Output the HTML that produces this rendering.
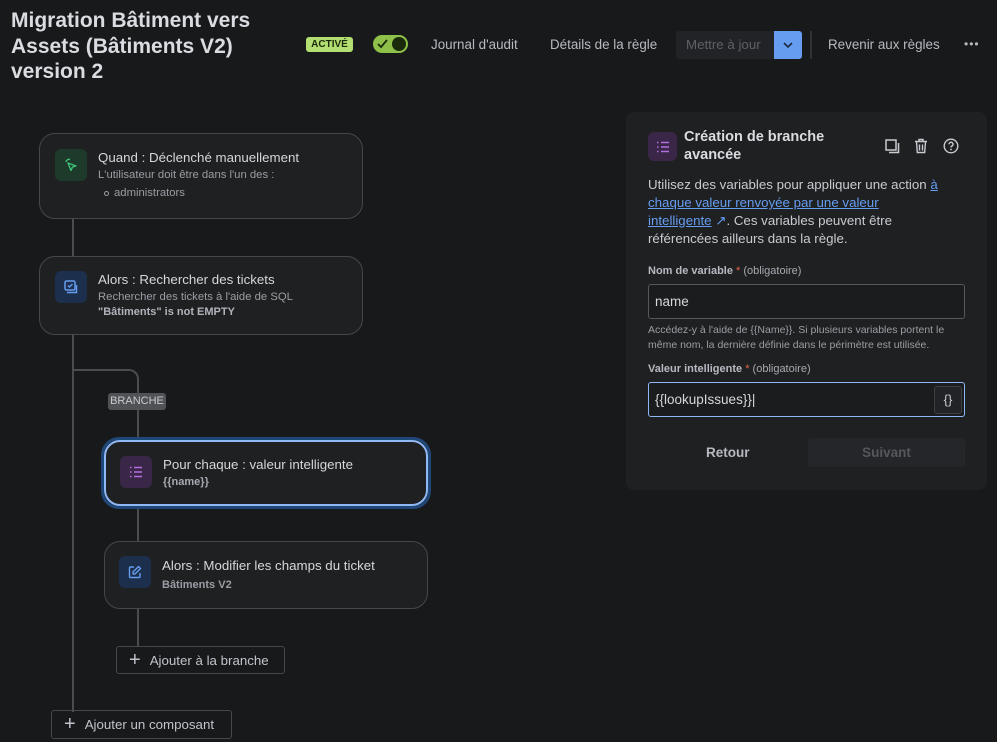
<!DOCTYPE html>
<html><head><meta charset="utf-8"><style>
*{box-sizing:border-box;margin:0;padding:0}
body{width:997px;height:742px;background:#18191b;font-family:"Liberation Sans",sans-serif;color:#c8cbd0;position:relative;overflow:hidden}
.abs{position:absolute}
h1{position:absolute;left:11px;top:8px;font-size:21px;line-height:25.5px;font-weight:bold;color:#d9dce0;width:280px}
.nav{font-size:13.4px;color:#b6bac0;top:37px}
.card{position:absolute;background:#1f2022;border:1px solid #45474a;border-radius:16px}
.ic{position:absolute;width:32px;height:32px;border-radius:6px;display:flex;align-items:center;justify-content:center}
.t{position:absolute;font-size:13.3px;color:#d4d7db}
.s{position:absolute;font-size:11.3px;color:#9a9ea4}
.b{position:absolute;font-size:11px;font-weight:bold;color:#9a9ea4}
.line{position:absolute;background:#4a4c4f}
.btn{position:absolute;border:1px solid #45474a;border-radius:3px;font-size:13.3px;color:#c0c4ca;display:flex;align-items:center;padding-left:12px}
.btn span.p{font-size:20px;font-weight:300;margin-right:9px;color:#c0c4ca}
</style></head><body>
<h1>Migration Bâtiment vers Assets (Bâtiments V2) version 2</h1>
<div class="abs" style="left:306px;top:37px;width:47px;height:15px;background:#b3df72;border-radius:3px;color:#1b2a0a;font-size:10px;font-weight:bold;text-align:center;line-height:15px">ACTIVÉ</div>
<div class="abs" style="left:373px;top:35px;width:35px;height:18px;background:#8fc14a;border-radius:9px">
<svg class="abs" style="left:4px;top:4px" width="11" height="10" viewBox="0 0 11 10"><path d="M1 5l3 3 6-7" stroke="#1b2a0a" stroke-width="1.8" fill="none"/></svg>
<div class="abs" style="right:2px;top:2px;width:14px;height:14px;border-radius:50%;background:#1b2a0a"></div></div>
<div class="abs nav" style="left:431px">Journal d'audit</div>
<div class="abs nav" style="left:550px">Détails de la règle</div>
<div class="abs" style="left:676px;top:31px;width:98px;height:28px;background:#222326;border-radius:3px 0 0 3px;color:#5d6167;font-size:13.3px;line-height:28px;padding-left:10px">Mettre à jour</div>
<div class="abs" style="left:774px;top:31px;width:28px;height:28px;background:#669df1;border-radius:0 3px 3px 0"><svg class="abs" style="left:9px;top:10px" width="10" height="8"><path d="M1 2l4 4 4-4" stroke="#1c2b41" stroke-width="1.6" fill="none"/></svg></div>
<div class="abs" style="left:810px;top:31px;width:2px;height:28px;background:#2f3134"></div>
<div class="abs nav" style="left:828px">Revenir aux règles</div>
<div class="abs" style="left:964px;top:37px;font-size:12px;color:#b6bac0;letter-spacing:1px">•••</div>

<div class="line" style="left:72px;top:218px;width:2px;height:38px"></div>
<div class="line" style="left:72px;top:334px;width:2px;height:378px"></div>
<div class="abs" style="left:72px;top:369px;width:67px;height:40px;border-top:2px solid #4a4c4f;border-right:2px solid #4a4c4f;border-top-right-radius:10px"></div>
<div class="line" style="left:137px;top:405px;width:2px;height:36px"></div>
<div class="abs" style="left:108px;top:393px;width:58px;height:17px;background:#505256;border-radius:3px;color:#c8cbd0;font-size:11px;text-align:center;line-height:17px">BRANCHE</div>
<div class="line" style="left:137px;top:506px;width:2px;height:36px"></div>
<div class="line" style="left:137px;top:608px;width:2px;height:39px"></div>

<div class="card" style="left:39px;top:133px;width:324px;height:86px">
<div class="ic" style="left:15px;top:15px;background:#1d3a2a"><svg width="14" height="14" viewBox="0 0 14 14"><path d="M4 5l8 3-3.5 1L7 12.5z" stroke="#3fc27a" stroke-width="1.4" fill="none" stroke-linejoin="round"/><path d="M2 4a3 3 0 0 1 4-2.5" stroke="#3fc27a" stroke-width="1.3" fill="none"/></svg></div>
<div class="t" style="left:58px;top:16px">Quand : Déclenché manuellement</div>
<div class="s" style="left:58px;top:35px">L'utilisateur doit être dans l'un des :</div>
<div class="abs" style="left:64px;top:57px;width:5px;height:5px;border:1px solid #9a9ea4;border-radius:50%"></div>
<div class="s" style="left:74px;top:53px">administrators</div>
</div>

<div class="card" style="left:39px;top:256px;width:324px;height:79px">
<div class="ic" style="left:15px;top:14px;background:#1c2f4d"><svg width="16" height="16" viewBox="0 0 16 16"><rect x="2" y="2" width="10" height="9" rx="1.5" stroke="#669df1" stroke-width="1.5" fill="none"/><path d="M5 6.5l1.5 1.5 3-3" stroke="#669df1" stroke-width="1.4" fill="none"/><path d="M4 13.5h9.5V6" stroke="#669df1" stroke-width="1.4" fill="none"/></svg></div>
<div class="t" style="left:58px;top:15px">Alors : Rechercher des tickets</div>
<div class="s" style="left:58px;top:34px">Rechercher des tickets à l'aide de SQL</div>
<div class="b" style="left:58px;top:49px;color:#b0b4ba">"Bâtiments" is not EMPTY</div>
</div>

<div class="abs" style="left:101px;top:437px;width:330px;height:72px;border:3px solid #1f4778;border-radius:18px"></div>
<div class="card" style="left:104px;top:440px;width:324px;height:66px;border:2px solid #8fb8f5">
<div class="ic" style="left:14px;top:14px;background:#3a2646"><svg width="14" height="12" viewBox="0 0 14 12"><g stroke="#b36fe0" stroke-width="1.5"><path d="M1 1.5h1.5M5 1.5h8M1 6h1.5M5 6h8M1 10.5h1.5M5 10.5h8"/></g></svg></div>
<div class="t" style="left:57px;top:15px">Pour chaque : valeur intelligente</div>
<div class="b" style="left:57px;top:34px;color:#a6aab0">{{name}}</div>
</div>

<div class="card" style="left:104px;top:541px;width:324px;height:68px">
<div class="ic" style="left:14px;top:14px;background:#1c2f4d"><svg width="14" height="14" viewBox="0 0 14 14"><path d="M6 2H2.5A1 1 0 0 0 1.5 3v8.5a1 1 0 0 0 1 1H11a1 1 0 0 0 1-1V8" stroke="#669df1" stroke-width="1.4" fill="none"/><path d="M10.5 1.5l2 2L7 9H5V7z" stroke="#669df1" stroke-width="1.4" fill="none" stroke-linejoin="round"/></svg></div>
<div class="t" style="left:57px;top:16px">Alors : Modifier les champs du ticket</div>
<div class="b" style="left:57px;top:37px">Bâtiments V2</div>
</div>

<div class="btn" style="left:116px;top:646px;width:169px;height:28px"><span class="p">+</span>Ajouter à la branche</div>
<div class="btn" style="left:51px;top:710px;width:181px;height:29px"><span class="p">+</span>Ajouter un composant</div>

<div class="abs" style="left:626px;top:112px;width:361px;height:378px;background:#1f2022;border-radius:8px">
<div class="ic" style="left:22px;top:20px;width:29px;height:29px;background:#3a2646"><svg width="14" height="12" viewBox="0 0 14 12"><g stroke="#b36fe0" stroke-width="1.5"><path d="M1 1.5h1.5M5 1.5h8M1 6h1.5M5 6h8M1 10.5h1.5M5 10.5h8"/></g></svg></div>
<div class="abs" style="left:58px;top:16px;font-size:14.5px;font-weight:bold;color:#d9dce0;line-height:18px;width:170px">Création de branche avancée</div>
<svg class="abs" style="left:259px;top:27px" width="15" height="15" viewBox="0 0 15 15"><rect x="1" y="1" width="10" height="10" stroke="#c8cbd0" stroke-width="1.5" fill="none"/><path d="M13.5 4v9.5H4" stroke="#c8cbd0" stroke-width="1.5" fill="none"/></svg>
<svg class="abs" style="left:288px;top:26px" width="14" height="16" viewBox="0 0 14 16"><path d="M1 3.5h12M5 3.5V1.5h4v2M2.5 3.5l.8 11h7.4l.8-11M5.5 6.5v6M8.5 6.5v6" stroke="#c8cbd0" stroke-width="1.4" fill="none"/></svg>
<svg class="abs" style="left:317px;top:26px" width="16" height="16" viewBox="0 0 16 16"><circle cx="8" cy="8" r="6.8" stroke="#c8cbd0" stroke-width="1.4" fill="none"/><path d="M6 6.3a2 2 0 1 1 2.5 1.9c-.5.2-.5.6-.5 1.3" stroke="#c8cbd0" stroke-width="1.4" fill="none"/><circle cx="8" cy="11.5" r=".9" fill="#c8cbd0"/></svg>
<div class="abs" style="left:22px;top:64px;width:296px;font-size:13.3px;line-height:18px;color:#c8cbd0">Utilisez des variables pour appliquer une action <span style="color:#669df1;text-decoration:underline">à chaque valeur renvoyée par une valeur intelligente</span> <span style="color:#669df1">↗</span>. Ces variables peuvent être référencées ailleurs dans la règle.</div>
<div class="abs" style="left:22px;top:153px;font-size:11px;color:#a6aab0"><b style="color:#b6bac0">Nom de variable</b> <span style="color:#e2674e">*</span> (obligatoire)</div>
<div class="abs" style="left:22px;top:172px;width:317px;height:35px;border:1px solid #55585c;border-radius:3px;background:#1b1c1e;font-size:13.5px;line-height:33px;padding-left:6px;color:#d4d7db">name</div>
<div class="abs" style="left:22px;top:211px;width:320px;font-size:10.5px;line-height:15px;color:#9a9ea4">Accédez-y à l'aide de {{Name}}. Si plusieurs variables portent le même nom, la dernière définie dans le périmètre est utilisée.</div>
<div class="abs" style="left:22px;top:251px;font-size:11px;color:#a6aab0"><b style="color:#b6bac0">Valeur intelligente</b> <span style="color:#e2674e">*</span> (obligatoire)</div>
<div class="abs" style="left:22px;top:270px;width:317px;height:35px;border:1px solid #8fb8f5;border-radius:3px;background:#1b1c1e;font-size:13.5px;line-height:33px;padding-left:6px;color:#d4d7db">{{lookupIssues}}|</div>
<div class="abs" style="left:308px;top:274px;width:28px;height:28px;border:1px solid #3d3f42;border-radius:3px;background:#222326;font-size:13px;color:#c8cbd0;text-align:center;line-height:26px">{}</div>
<div class="abs" style="left:80px;top:333px;font-size:13.5px;font-weight:bold;color:#b6bac0">Retour</div>
<div class="abs" style="left:182px;top:326px;width:157px;height:29px;background:#252629;border-radius:3px;font-size:13.5px;font-weight:bold;color:#54575c;text-align:center;line-height:29px">Suivant</div>
</div>
</body></html>
